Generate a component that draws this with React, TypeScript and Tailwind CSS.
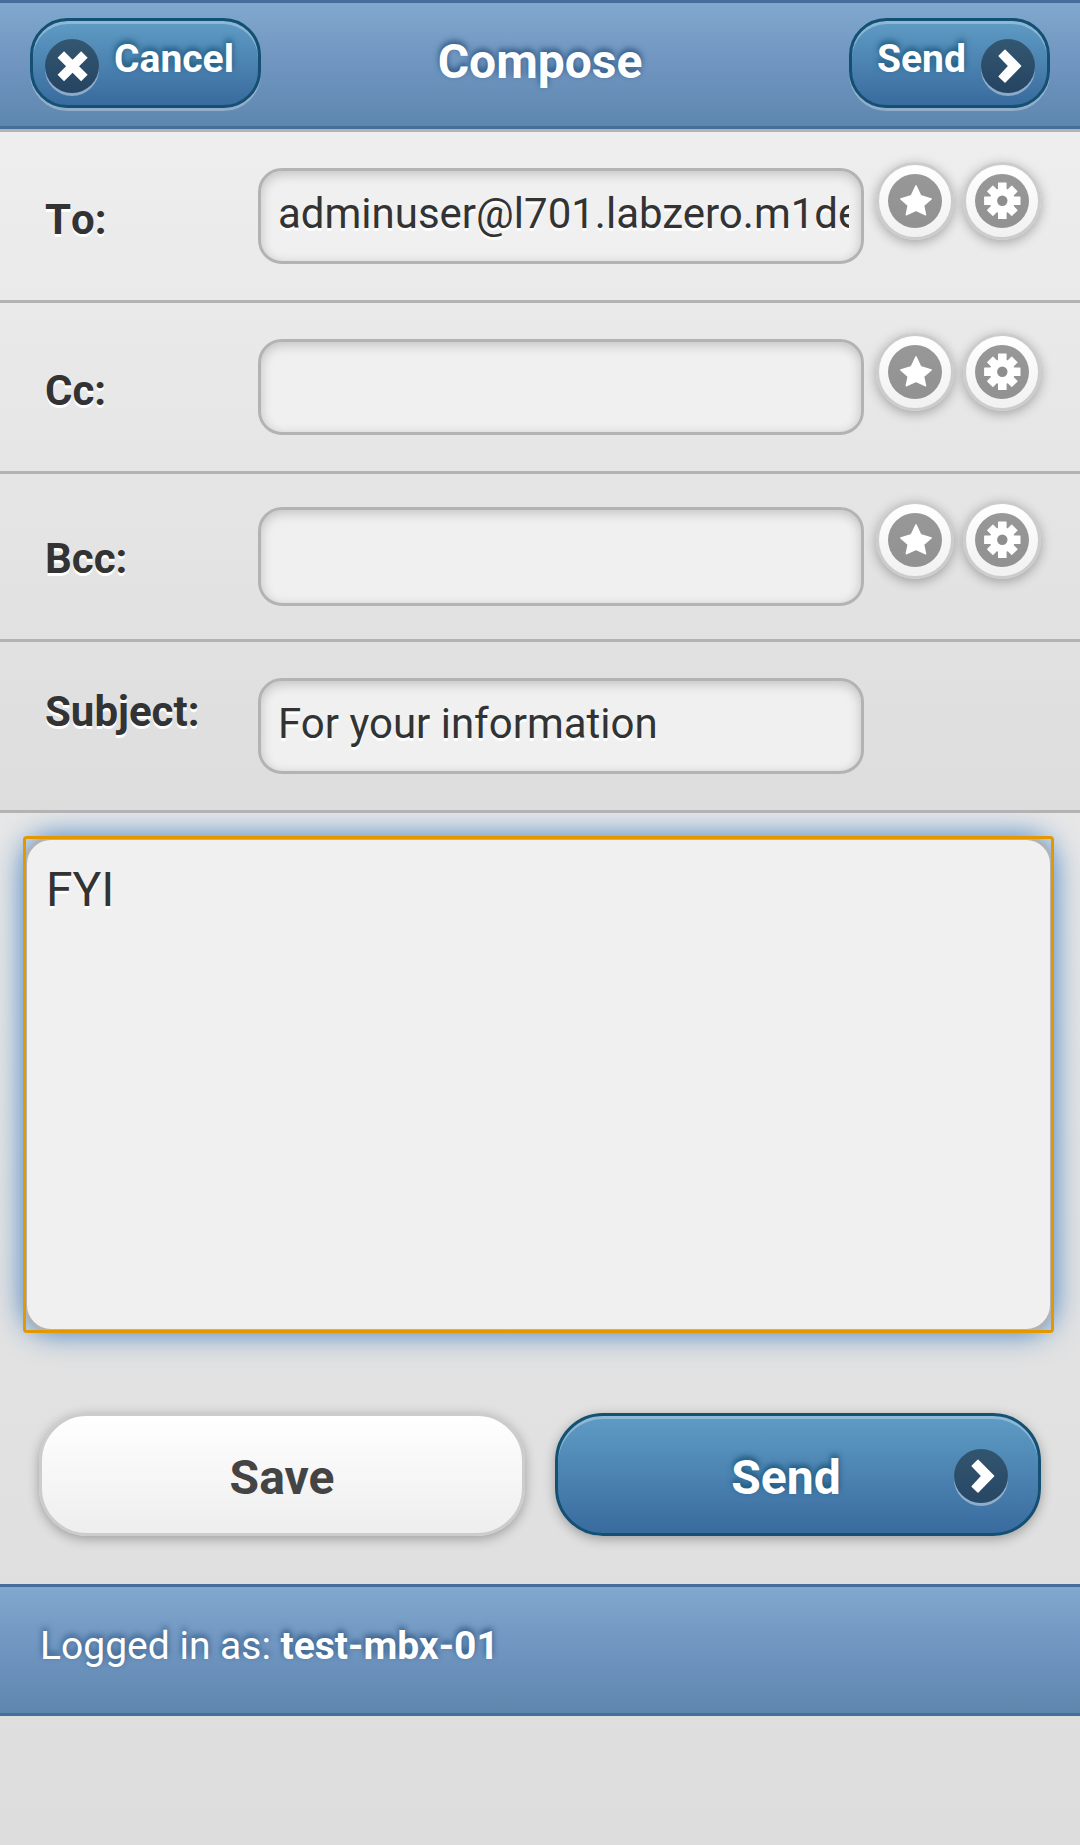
import type { ReactNode } from "react";

const lightText = "[text-shadow:0_3px_0_#fff]";

function IconDisc({ children, tone }: { children: ReactNode; tone: "blue" | "light" }) {
  return (
    <span
      className={
        tone === "blue"
          ? "block size-[54px] shrink-0 rounded-full bg-black/40 shadow-[0_3px_0_rgba(255,255,255,0.4)]"
          : "block size-[54px] shrink-0 rounded-full bg-black/40"
      }
    >
      <svg viewBox="0 0 54 54" className="size-full" fill="#fff" stroke="#fff" strokeLinejoin="round">
        {children}
      </svg>
    </span>
  );
}

const CrossIcon = () => <path d="M15.8 15.5 39.4 39.1M39.4 15.5 15.8 39.1" strokeWidth="9.2" fill="none" />;

const ArrowIcon = () => <path d="M24 11.2 39.6 27 24 43 18.2 37.4 27.8 27 18.2 17Z" strokeWidth="1.4" />;

const StarIcon = () => (
  <path d="M28 11.8 32.6 21.6 43.2 24.9 35.6 31.4 37.6 40.8 28 36.4 18.2 40.8 20.2 31.4 12.8 24.9 23.4 21.6Z" strokeWidth="1.4" />
);

const GearIcon = () => (
  <g transform="translate(27.3 26.8)" stroke="none">
    {[0, 45, 90, 135].map((angle) => (
      <rect
        key={angle}
        x="-4.3"
        y={angle % 90 === 0 ? -18.2 : -17.6}
        width="8.6"
        height={angle % 90 === 0 ? 36.4 : 35.2}
        rx="0.6"
        transform={`rotate(${angle})`}
      />
    ))}
    <circle r="12.5" />
    <circle r="5.2" fill="#8e8e8e" />
  </g>
);

function RoundButton({ label, children }: { label: string; children: ReactNode }) {
  return (
    <button
      aria-label={label}
      className="flex size-[78px] items-center justify-center rounded-full border-[3px] border-[#ccc] bg-linear-to-b from-white to-[#f1f1f1] shadow-[0_3px_12px_rgba(0,0,0,0.3)]"
    >
      <IconDisc tone="light">{children}</IconDisc>
    </button>
  );
}

interface FieldProps {
  label: string;
  value?: string;
  rowClass: string;
  labelClass: string;
  inputClass: string;
  buttonsClass?: string;
}

function Field({ label, value = "", rowClass, labelClass, inputClass, buttonsClass }: FieldProps) {
  return (
    <div className={`flex items-start border-b-[3px] border-[#b3b3b3] pl-[45px] ${rowClass}`}>
      <div className={`w-[213px] shrink-0 text-[42px] leading-[50px] font-bold [font-kerning:none] ${labelClass} ${lightText}`}>
        {label}
      </div>
      <div
        className={`w-[606px] shrink-0 rounded-[24px] border-[3px] border-[#b3b3b3] bg-[#f0f0f0] pr-3 pl-[17px] shadow-[inset_0_3px_12px_rgba(0,0,0,0.2)] ${inputClass}`}
      >
        <div className={`overflow-hidden text-[42px] leading-[85px] whitespace-nowrap ${lightText}`}>{value}</div>
      </div>
      {buttonsClass && (
        <div className={`ml-3 flex gap-[9px] ${buttonsClass}`}>
          <RoundButton label="Favorites">
            <StarIcon />
          </RoundButton>
          <RoundButton label="Options">
            <GearIcon />
          </RoundButton>
        </div>
      )}
    </div>
  );
}

export default function App() {
  return (
    <div className="flex h-[1845px] w-[1080px] flex-col overflow-hidden bg-linear-to-b from-[#efefef] to-[#dddddd] font-['Roboto',sans-serif] text-[#333]">
      <header className="flex h-[129px] shrink-0 items-start justify-between border-y-[3px] border-[#456f9a] bg-linear-to-b from-[#81a8ce] via-[#6f95c0] to-[#5e87ae] px-[30px] text-white">
        <button className="mt-[15px] flex h-[90px] w-[231px] rounded-[37.5px] border-[3px] border-[#145072] bg-linear-to-b from-[#5f9cc5] to-[#396b9e] pl-3 shadow-[inset_0_3px_0_rgba(255,255,255,0.3),0_3px_0_rgba(255,255,255,0.3)]">
          <span className="mt-[18px]">
            <IconDisc tone="blue">
              <CrossIcon />
            </IconDisc>
          </span>
          <span className="ml-[15px] text-[39px] leading-[77px] font-bold [text-shadow:0_-3px_6px_#145072]">Cancel</span>
        </button>
        <h1 className="mr-[30px] text-[48px] leading-[117px] font-bold [text-shadow:0_-3px_6px_#254f7a]">Compose</h1>
        <button className="mt-[15px] flex h-[90px] w-[201px] justify-between rounded-[37.5px] border-[3px] border-[#145072] bg-linear-to-b from-[#5f9cc5] to-[#396b9e] pr-3 pl-[25px] shadow-[inset_0_3px_0_rgba(255,255,255,0.3),0_3px_0_rgba(255,255,255,0.3)]">
          <span className="text-[39px] leading-[77px] font-bold [text-shadow:0_-3px_6px_#145072]">Send</span>
          <span className="mt-[18px]">
            <IconDisc tone="blue">
              <ArrowIcon />
            </IconDisc>
          </span>
        </button>
      </header>

      <section className="relative z-10 shrink-0 border-t-[3px] border-[#b3b3b3] bg-linear-to-b from-[#eeeeee] to-[#dddddd]">
        <Field
          label="To:"
          value="adminuser@l701.labzero.m1dev.com"
          rowClass="h-[171px]"
          labelClass="mt-[63px]"
          inputClass="mt-9 h-24"
          buttonsClass="mt-[30px]"
        />
        <Field label="Cc:" rowClass="h-[171px]" labelClass="mt-[63px]" inputClass="mt-9 h-24" buttonsClass="mt-[30px]" />
        <Field label="Bcc:" rowClass="h-[168px]" labelClass="mt-[60px]" inputClass="mt-[33px] h-[99px]" buttonsClass="mt-[27px]" />
        <Field label="Subject:" value="For your information" rowClass="h-[171px]" labelClass="mt-[45px]" inputClass="mt-9 h-24" />
      </section>

      <div className="relative mx-6 mt-6 mr-[27px] h-[495px] shrink-0 rounded-[27px] border-[3px] border-[#b3b3b3] bg-[#f0f0f0] px-[19px] pt-5 text-[48px] leading-[60px] shadow-[0_0_30px_#387bbe]">
        <div className={lightText}>FYI</div>
        <div className="pointer-events-none absolute -inset-1 rounded-[4px] border-[3px] border-[#e59700]" />
      </div>

      <div className="mt-[81px] flex shrink-0 gap-[30px] pl-[39px] text-[48px] leading-[124px] font-bold">
        <button className="h-[123px] w-[486px] rounded-[48px] border-[3px] border-[#ccc] bg-linear-to-b from-white to-[#eeeeee] text-[#444] shadow-[0_3px_12px_rgba(0,0,0,0.3)]">
          Save
        </button>
        <button className="relative h-[123px] w-[486px] rounded-[48px] border-[3px] border-[#145072] bg-linear-to-b from-[#5f9cc5] to-[#396b9e] text-white shadow-[inset_0_3px_0_rgba(255,255,255,0.3),0_3px_12px_rgba(0,0,0,0.3)]">
          <span className="pr-6 [text-shadow:0_-3px_6px_#145072]">Send</span>
          <span className="absolute top-[33px] right-[30px]">
            <IconDisc tone="blue">
              <ArrowIcon />
            </IconDisc>
          </span>
        </button>
      </div>

      <footer className="mt-12 h-[132px] shrink-0 border-y-[3px] border-[#456f9a] bg-linear-to-b from-[#81a8ce] via-[#6f95c0] to-[#5e87ae] pl-10 text-[39px] leading-[118px] text-white [text-shadow:0_-3px_6px_#254f7a]">
        Logged in as: <b>test-mbx-01</b>
      </footer>
    </div>
  );
}
